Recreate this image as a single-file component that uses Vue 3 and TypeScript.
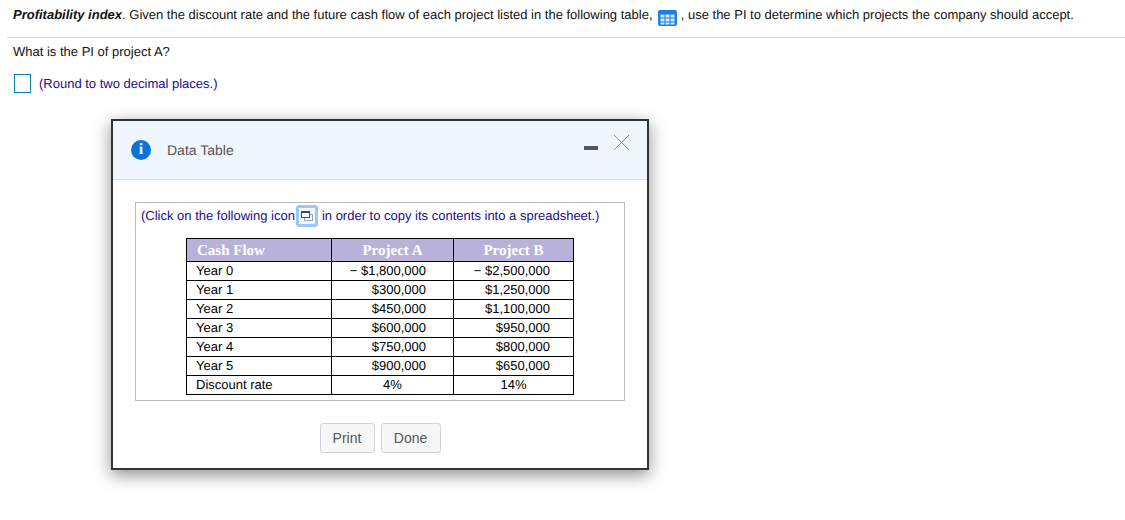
<script setup lang="ts">
interface Row {
  label: string
  a: string
  b: string
  center?: boolean
}

const rows: Row[] = [
  { label: 'Year 0', a: '− $1,800,000', b: '− $2,500,000' },
  { label: 'Year 1', a: '$300,000', b: '$1,250,000' },
  { label: 'Year 2', a: '$450,000', b: '$1,100,000' },
  { label: 'Year 3', a: '$600,000', b: '$950,000' },
  { label: 'Year 4', a: '$750,000', b: '$800,000' },
  { label: 'Year 5', a: '$900,000', b: '$650,000' },
  { label: 'Discount rate', a: '4%', b: '14%', center: true },
]
</script>

<template>
  <div class="page">
    <p class="question">
      <b><i>Profitability index</i></b>. Given the discount rate and the future cash flow of each project listed in the following table,
      <span class="grid-icon">
        <svg width="19" height="16" viewBox="0 0 19 16">
          <rect width="19" height="16" rx="2" fill="#1a7fe6" />
          <path d="M2.500 4.500h4v3h-4zM7.500 4.500h4v3h-4zM12.500 4.500h4v3h-4zM2.500 8.500h4v3h-4zM7.500 8.500h4v3h-4zM12.500 8.500h4v3h-4zM2.500 12.500h4v2h-4zM7.500 12.500h4v2h-4zM12.500 12.500h4v2h-4z" fill="#d5e8fc" />
        </svg>
      </span>
      , use the PI to determine which projects the company should accept.
    </p>
    <hr class="rule" />
    <p class="ask">What is the PI of project A?</p>
    <div class="answer">
      <span class="input"></span>
      <span class="hint">(Round to two decimal places.)</span>
    </div>

    <div class="dialog">
      <div class="dialog-head">
        <span class="info">i</span>
        <span class="title">Data Table</span>
        <span class="minimize"></span>
        <svg class="close" width="15" height="15" viewBox="0 0 15 15">
          <path d="M0 0l15 15M15 0L0 15" stroke="#8d8f96" stroke-width="1" fill="none" />
        </svg>
      </div>
      <div class="dialog-body">
        <div class="box">
          <div class="copy-line">
            <span>(Click on the following icon</span>
            <span class="copy-icon">
              <svg width="12" height="11" viewBox="0 0 12 11">
                <rect x="3.500" y="3.500" width="8" height="6" fill="none" stroke="#9aa0d0" />
                <rect x="0.500" y="0.500" width="8" height="6" fill="#fff" stroke="#3f4583" />
                <path d="M1 1.500h7" stroke="#3f4583" />
              </svg>
            </span>
            <span>in order to copy its contents into a spreadsheet.)</span>
          </div>
          <table class="data">
            <thead>
              <tr>
                <th class="first">Cash Flow</th>
                <th>Project A</th>
                <th>Project B</th>
              </tr>
            </thead>
            <tbody>
              <tr v-for="row in rows" :key="row.label">
                <td class="first">{{ row.label }}</td>
                <td :class="row.center ? 'mid' : 'num num-a'">{{ row.a }}</td>
                <td :class="row.center ? 'mid' : 'num num-b'">{{ row.b }}</td>
              </tr>
            </tbody>
          </table>
        </div>
        <div class="actions">
          <button class="btn print">Print</button>
          <button class="btn done">Done</button>
        </div>
      </div>
    </div>
  </div>
</template>

<style>
body {
  background: #fff;
}
</style>

<style scoped>
.page {
  position: relative;
  width: 1125px;
  height: 520px;
  overflow: hidden;
  font-family: "Liberation Sans", Arial, sans-serif;
  font-size: 13px;
  text-rendering: geometricPrecision;
  color: #111;
}

.question {
  margin: 0;
  padding: 6px 0 0 13px;
  height: 30px;
  box-sizing: border-box;
  line-height: 17px;
  white-space: nowrap;
}

.grid-icon {
  display: inline-block;
  width: 19px;
  height: 16px;
  margin: 0 0 0 2px;
  vertical-align: -7px;
}

.grid-icon svg {
  display: block;
}

.rule {
  margin: 7px 0 0 7px;
  border: none;
  border-top: 1px solid #d3d6e0;
}

.ask {
  margin: 6px 0 0 13px;
  line-height: 16px;
}

.answer {
  display: flex;
  align-items: center;
  gap: 8px;
  margin: 14px 0 0 14px;
}

.input {
  width: 15px;
  height: 17px;
  border: 1px solid #0a7fa8;
  background: #fff;
}

.hint {
  color: #1d0a8c;
}

.dialog {
  position: absolute;
  left: 111px;
  top: 119px;
  width: 538px;
  height: 351px;
  box-sizing: border-box;
  border: 2px solid #333;
  background: #fff;
  box-shadow: 0 5px 16px rgba(0, 0, 0, 0.45);
}

.dialog-head {
  position: relative;
  display: flex;
  align-items: center;
  height: 59px;
  box-sizing: border-box;
  padding-left: 18px;
  background: #f0f6fe;
  border-bottom: 1px solid #cfe2f5;
}

.info {
  width: 20px;
  height: 20px;
  border-radius: 50%;
  background: #0a73d9;
  color: #fff;
  font-family: "Liberation Serif", serif;
  font-weight: bold;
  font-size: 16px;
  line-height: 20px;
  text-align: center;
}

.title {
  margin-left: 16px;
  font-size: 14px;
  color: #555;
}

.minimize {
  position: absolute;
  left: 471px;
  top: 25px;
  width: 14px;
  height: 4px;
  background: #555;
}

.close {
  position: absolute;
  left: 501px;
  top: 14px;
}

.dialog-body {
  padding: 22px 22px 0 22px;
}

.box {
  height: 199px;
  box-sizing: border-box;
  border: 1px solid #bbb;
  padding-top: 3px;
}

.copy-line {
  display: flex;
  align-items: center;
  gap: 1px;
  padding-left: 5px;
  height: 18px;
  color: #1d0a8c;
  white-space: nowrap;
}

.copy-icon {
  display: inline-flex;
  align-items: center;
  justify-content: center;
  width: 22px;
  height: 22px;
  box-sizing: border-box;
  margin: 2px 3px 0 0;
  border: 3px solid #9cc8f7;
  border-radius: 3px;
  background: #f4f8fe;
}

.data {
  margin: 14px 0 0 50px;
  width: 388px;
  border-collapse: collapse;
  table-layout: fixed;
  color: #000;
}

.data th,
.data td {
  border: 1px solid #000;
  padding: 0;
  height: 18px;
  line-height: 18px;
}

.data th {
  height: 21px;
  padding-top: 1px;
  box-sizing: content-box;
  background: #b8b2da;
  color: #fff;
  font-family: "Liberation Serif", serif;
  font-size: 15px;
  font-weight: bold;
  text-align: center;
}

.data th.first {
  text-align: left;
  padding-left: 10px;
  width: 145px;
  box-sizing: border-box;
}

.data th:nth-child(2) {
  width: 122px;
  box-sizing: border-box;
}

.data td.first {
  padding-left: 9px;
}

.num {
  text-align: right;
}

.num-a {
  padding-right: 27px !important;
}

.num-b {
  padding-right: 23px !important;
}

.mid {
  text-align: center;
}

.actions {
  display: flex;
  justify-content: center;
  gap: 6px;
  margin-top: 22px;
}

.btn {
  height: 30px;
  box-sizing: border-box;
  border: 1px solid #d4d4d4;
  border-radius: 3px;
  background: #f7f7f7;
  color: #555;
  font-family: "Liberation Sans", Arial, sans-serif;
  font-size: 14px;
  padding: 0;
}

.print {
  width: 55px;
}

.done {
  width: 60px;
}
</style>
